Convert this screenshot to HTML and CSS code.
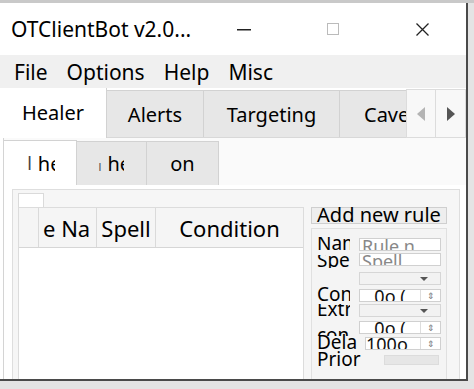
FILE: index.html
```html
<!DOCTYPE html>
<html lang="en">
<head>
  <meta charset="UTF-8" />
  <title>OTClientBot v2.0</title>
  <link rel="stylesheet" href="styles.css">
</head>
<body>
  <div class="window">
    <div class="titlebar">
      <span class="title">OTClientBot v2.0...</span>
      <span class="ctl ctl-min"><svg width="14" height="2" viewBox="0 0 14 2"><rect width="14" height="1.5" fill="#222"/></svg></span>
      <span class="ctl ctl-max"><svg width="12" height="12" viewBox="0 0 12 12"><rect x="0.5" y="0.5" width="11" height="11" fill="none" stroke="#bbb"/></svg></span>
      <span class="ctl ctl-close"><svg width="13" height="13" viewBox="0 0 13 13"><path d="M0.5 0.5L12.5 12.5M12.5 0.5L0.5 12.5" stroke="#222" stroke-width="1.3"/></svg></span>
    </div>

    <div class="menubar">
      <span>File</span>
      <span>Options</span>
      <span>Help</span>
      <span>Misc</span>
    </div>

    <div class="tabbar">
      <div class="tab active">Healer</div>
      <div class="tab">Alerts</div>
      <div class="tab">Targeting</div>
      <div class="tab tab-cut">Cavebot</div>
      <div class="scroll-btn"><svg width="8" height="14" viewBox="0 0 8 14"><path d="M8 0L0 7L8 14Z" fill="#b4b4b4"/></svg></div>
      <div class="scroll-btn"><svg width="8" height="14" viewBox="0 0 8 14"><path d="M0 0L8 7L0 14Z" fill="#555"/></svg></div>
    </div>

    <div class="pane">
      <div class="subtabs">
        <div class="subtab active"><span class="bar">l</span><span class="cut">he</span></div>
        <div class="subtab"><span class="bar small">l</span><span class="cut">he</span></div>
        <div class="subtab">on</div>
      </div>

      <div class="subpane">
        <div class="frame">
          <div class="mini-tab"></div>
          <div class="content">
            <div class="table">
              <div class="thead">
                <div class="th corner"></div>
                <div class="th col-name"><span>e Na</span></div>
                <div class="th col-spell">Spell</div>
                <div class="th col-cond">Condition</div>
              </div>
              <div class="tbody"></div>
            </div>

            <div class="side">
              <div class="add-btn"><span>Add new rule</span></div>
              <div class="group">
                <div class="row r-name">
                  <div class="lbl"><span>Name</span></div>
                  <div class="field input hint"><span>Rule n</span></div>
                </div>
                <div class="row r-spell">
                  <div class="lbl"><span>Spell</span></div>
                  <div class="field input hint"><span>Spell</span></div>
                </div>
                <div class="row r-combo">
                  <div class="lbl"></div>
                  <div class="field combo"><span class="caret"></span></div>
                </div>
                <div class="row r-spin">
                  <div class="lbl"><span>Con</span></div>
                  <div class="field spin"><span class="val">0o (</span><span class="arr">&#8661;</span></div>
                </div>
                <div class="row r-combo2">
                  <div class="lbl"><span>Extr</span></div>
                  <div class="field combo"><span class="caret"></span></div>
                </div>
                <div class="row r-spin2">
                  <div class="lbl"><span>con</span></div>
                  <div class="field spin"><span class="val">0o (</span><span class="arr">&#8661;</span></div>
                </div>
                <div class="row r-delay">
                  <div class="lbl wide"><span>Dela</span></div>
                  <div class="field spin narrow"><span class="val">100o</span><span class="arr">&#8661;</span></div>
                </div>
                <div class="row r-prio">
                  <div class="lbl wide"><span>Prior</span></div>
                  <div class="field progress"></div>
                </div>
              </div>
            </div>
          </div>
        </div>
      </div>
    </div>
  </div>
</body>
</html>
```

FILE: styles.css
```css
* {
  margin: 0;
  padding: 0;
  box-sizing: border-box;
}
body {
  width: 474px;
  height: 389px;
  overflow: hidden;
  background: #e4e4e4;
  border-top: 3px solid #c9c9c9;
  font-family: "Noto Sans", "Open Sans", sans-serif;
  color: #111;
}
.window {
  width: 468px;
  height: 378px;
  background: #fff;
  border-right: 2px solid #4a4a4a;
  border-bottom: 2px solid #4a4a4a;
  display: flex;
  flex-direction: column;
  overflow: hidden;
}

/* title bar */
.titlebar {
  height: 52px;
  flex: none;
  display: flex;
  align-items: center;
  padding-left: 11px;
  background: #fff;
}
.title {
  font-size: 21px;
  width: 226px;
  color: #000;
}
.ctl {
  display: flex;
  align-items: center;
  justify-content: center;
}
.ctl-min { width: 14px; margin-top: 2px; }
.ctl-max { width: 12px; margin-left: 76px; }
.ctl-close { width: 13px; margin-left: 77px; }

/* menu */
.menubar {
  height: 33px;
  flex: none;
  background: #f0f0f0;
  display: flex;
  align-items: center;
  padding-left: 14px;
  gap: 19px;
  font-size: 21px;
  color: #000;
}

/* main tabs */
.tabbar {
  height: 50px;
  flex: none;
  display: flex;
  align-items: flex-end;
  background: #fff;
  border-bottom: 1px solid #d8d8d8;
}
.tab {
  height: 47px;
  background: #e7e7e7;
  border: 1px solid #d2d2d2;
  border-bottom: none;
  border-left: none;
  display: flex;
  align-items: center;
  justify-content: center;
  font-size: 20px;
  color: #000;
}
.tab:nth-child(1) { width: 107px; }
.tab:nth-child(2) { width: 97px; }
.tab:nth-child(3) { width: 136px; }
.tab.active {
  height: 50px;
  background: #fff;
  border: none;
  border-right: 1px solid #d2d2d2;
  margin-bottom: -1px;
  padding-bottom: 2px;
}
.tab-cut {
  width: 66px;
  overflow: hidden;
  justify-content: flex-start;
  padding-left: 24px;
  white-space: nowrap;
  border-right: none;
}
.scroll-btn {
  width: 30px;
  height: 49px;
  margin-bottom: -1px;
  background: #f8f8f8;
  border: 1px solid #dcdcdc;
  display: flex;
  align-items: center;
  justify-content: center;
}
.scroll-btn + .scroll-btn { border-left: none; }

/* pane */
.pane {
  flex: 1;
  margin-left: 3px;
  border-left: 1px solid #d4d4d4;
  background: #fafafa;
  display: flex;
  flex-direction: column;
}
.subtabs {
  height: 47px;
  flex: none;
  display: flex;
  align-items: flex-end;
  padding-top: 2px;
}
.subtab {
  height: 44px;
  width: 70px;
  background: #e7e7e7;
  border: 1px solid #d2d2d2;
  border-left: none;
  border-bottom: none;
  display: flex;
  align-items: center;
  justify-content: center;
  font-size: 20px;
  color: #000;
}
.subtab:nth-child(3) { width: 72px; }
.subtab.active {
  width: 73px;
  height: 45px;
  background: #fff;
  border-right: 1px solid #d2d2d2;
  padding-left: 2px;
}
.subtab .bar {
  color: #444;
  font-size: 18px;
  margin-right: 6px;
}
.subtab .bar.small {
  font-size: 11px;
  margin-top: 6px;
  color: #444;
}
.subtab .cut {
  display: inline-block;
  width: 17px;
  overflow: hidden;
  white-space: nowrap;
}

.subpane {
  flex: 1;
  background: #fff;
  padding: 4px 6px 0 8px;
}
.frame {
  height: 100%;
  border: 1px solid #dedede;
  border-bottom: none;
  background: #f6f6f6;
  padding: 3px 0 0 5px;
  display: flex;
  flex-direction: column;
}
.mini-tab {
  width: 26px;
  height: 14px;
  background: #fff;
  border: 1px solid #dadada;
  border-bottom: none;
  flex: none;
}
.content {
  flex: 1;
  display: flex;
}

/* table */
.table {
  width: 286px;
  display: flex;
  flex-direction: column;
  border: 1px solid #dcdcdc;
  border-bottom: none;
  background: #fff;
}
.thead {
  height: 40px;
  display: flex;
  background: #f5f5f5;
  border-bottom: 1px solid #d6d6d6;
  font-size: 22px;
  color: #000;
}
.th {
  display: flex;
  align-items: center;
  justify-content: center;
  border-right: 1px solid #dadada;
  overflow: hidden;
  white-space: nowrap;
}
.corner { width: 20px; }
.col-name { width: 58px; justify-content: flex-start; padding-left: 4px; }
.col-spell { width: 59px; }
.col-cond { width: 147px; border-right: none; }
.tbody { flex: 1; }

/* side panel */
.side {
  width: 136px;
  margin-left: 7px;
  display: flex;
  flex-direction: column;
}
.add-btn {
  height: 17px;
  background: #eee;
  border: 1px solid #cfcfcf;
  font-size: 20px;
  line-height: 15px;
  display: flex;
  justify-content: center;
  white-space: nowrap;
  color: #000;
}
.add-btn span { margin-top: -1px; }
.group {
  flex: 1;
  margin-top: 4px;
  border: 1px solid #e0e0e0;
  border-bottom: none;
  background: #f4f4f4;
  padding: 8px 6px 0 5px;
}
.row {
  display: flex;
  align-items: flex-start;
}
.lbl {
  width: 33px;
  margin-right: 9px;
  overflow: hidden;
  white-space: nowrap;
  font-size: 19px;
  flex: none;
  color: #000;
}
.lbl.wide { width: 48px; margin-right: 0; }
.lbl span { display: block; }
.field {
  width: 82px;
  height: 13px;
  background: #fff;
  border: 1px solid #d0d0d0;
  overflow: hidden;
  white-space: nowrap;
  flex: none;
}
.input span {
  display: block;
  font-size: 18px;
  line-height: 15px;
  padding-left: 2px;
  color: #888;
}
.combo {
  background: #f2f2f2;
  border-color: #d6d6d6;
  position: relative;
}
.caret {
  position: absolute;
  right: 12px;
  top: 4px;
  border-left: 4px solid transparent;
  border-right: 4px solid transparent;
  border-top: 4px solid #555;
}
.spin {
  display: flex;
  align-items: flex-end;
}
.spin .val {
  width: 61px;
  text-align: center;
  font-size: 18px;
  line-height: 13px;
  height: 12px;
  overflow: hidden;
  border-right: 1px solid #ddd;
  padding-top: 1px;
}
.spin .arr {
  flex: 1;
  text-align: center;
  font-size: 9px;
  line-height: 12px;
  color: #777;
  align-self: center;
}
.spin.narrow { width: 76px; }
.spin.narrow .val { width: 55px; text-align: left; }

.r-name { height: 16px; }
.r-name .lbl { height: 16px; line-height: 22px; }
.r-name .lbl span { margin-top: -5px; }
.r-name .field { margin-top: 1px; }
.r-spell { height: 18px; }
.r-spell .lbl { height: 13px; margin-top: 2px; }
.r-spell .lbl span { line-height: 20px; margin-top: -5px; }
.r-combo { height: 17px; }
.r-combo .field { margin-top: 1px; }
.r-spin { height: 16px; }
.r-spin .lbl { height: 17px; margin-top: -4px; line-height: 20px; }
.r-spin .field { margin-top: 1px; }
.r-combo2 { height: 17px; }
.r-combo2 .lbl { height: 14px; line-height: 16px; }
.r-combo2 .lbl span { margin-top: -3px; }
.r-spin2 { height: 15px; }
.r-spin2 .lbl { height: 10px; margin-top: 5px; line-height: 18px; }
.r-delay { height: 15px; }
.r-delay .lbl { height: 16px; line-height: 18px; margin-top: -3px; }
.r-delay .field { margin-top: 1px; }
.r-prio { height: 20px; }
.r-prio .lbl { height: 17px; line-height: 18px; margin-top: -1px; }
.progress {
  width: 55px;
  height: 10px;
  margin-left: 21px;
  margin-top: 4px;
  background: #e6e6e6;
  border-color: #dcdcdc;
}
.r-prio .lbl.wide { width: 46px; }
```
